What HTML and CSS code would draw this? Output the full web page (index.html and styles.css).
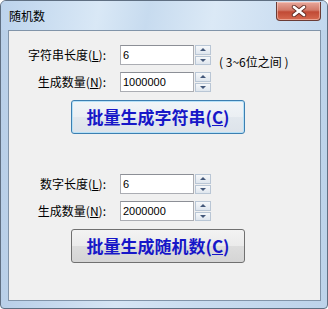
FILE: index.html
```html
<!DOCTYPE html>
<html lang="zh-CN">
<head>
  <meta charset="UTF-8">
  <title>随机数</title>
  <link rel="stylesheet" href="styles.css">
</head>
<body>
  <div class="window">
    <div class="titlebar">
      <span class="title">随机数</span>
      <div class="close">
        <svg width="16" height="12" viewBox="0 0 16 12">
          <path d="M3 2 L13 10 M13 2 L3 10" stroke="#5e2a22" stroke-width="4.4" stroke-linecap="round"/>
          <path d="M3 2 L13 10 M13 2 L3 10" stroke="#fff" stroke-width="2.8" stroke-linecap="round"/>
        </svg>
      </div>
    </div>

    <div class="client">
      <!-- string generator -->
      <div class="group">
        <div class="fields">
          <label class="lbl">字符串长度(<u>L</u>):</label>
          <input class="edit" type="text" value="6">
          <div class="spin"><span class="up"></span><span class="down"></span></div>
          <span class="hint">( 3~6位之间 )</span>

          <label class="lbl">生成数量(<u>N</u>):</label>
          <input class="edit" type="text" value="1000000">
          <div class="spin"><span class="up"></span><span class="down"></span></div>
        </div>
        <button class="big default">批量生成字符串(<u>C</u>)</button>
      </div>

      <!-- number generator -->
      <div class="group second">
        <div class="fields">
          <label class="lbl">数字长度(<u>L</u>):</label>
          <input class="edit" type="text" value="6">
          <div class="spin"><span class="up"></span><span class="down"></span></div>

          <label class="lbl">生成数量(<u>N</u>):</label>
          <input class="edit" type="text" value="2000000">
          <div class="spin"><span class="up"></span><span class="down"></span></div>
        </div>
        <button class="big">批量生成随机数(<u>C</u>)</button>
      </div>
    </div>
  </div>
</body>
</html>
```

FILE: styles.css
```css
body {
  margin: 0;
  font-family: "Noto Sans CJK SC", sans-serif;
  font-size: 12px;
  color: #000;
  background: #fff;
}
.window {
  width: 328px;
  height: 309px;
  box-sizing: border-box;
  border: 1px solid #5f6f82;
  border-radius: 6px 6px 4px 4px;
  background: linear-gradient(to right, #b8cfe8, #d6e5f4 35%, #c9dcef 60%, #bdd3ea);
  display: flex;
  flex-direction: column;
  overflow: hidden;
}
.titlebar {
  height: 29px;
  flex: none;
  display: flex;
  justify-content: space-between;
  align-items: flex-start;
  background: linear-gradient(100deg, #bcd3ec 0%, #d9e8f6 30%, #c7dbef 45%, #dbe9f6 65%, #c2d7ee 100%);
}
.title {
  margin: 7px 0 0 8px;
  line-height: 16px;
  font-size: 12px;
}
.close {
  width: 45px;
  height: 19px;
  margin: 1px 6px 0 0;
  box-sizing: border-box;
  border: 1px solid #6a3b35;
  border-top: none;
  border-radius: 0 0 4px 4px;
  background: linear-gradient(#e8a79b, #d27a69 45%, #c14a35 55%, #d66a50);
  box-shadow: inset 0 0 0 1px rgba(255, 220, 210, 0.5);
  display: flex;
  align-items: center;
  justify-content: center;
}
.close svg {
  display: block;
}
.client {
  flex: 1;
  margin: 0 6px 7px 7px;
  border: 1px solid #8194a9;
  background: #f0f0f0;
}
.group {
  padding-top: 14px;
}
.group.second {
  padding-top: 40px;
}
.fields {
  display: grid;
  grid-template-columns: 103px 74px 16px auto;
  grid-auto-rows: 20px;
  row-gap: 7px;
}
.lbl {
  grid-column: 1;
  text-align: right;
  line-height: 20px;
  padding-right: 6px;
}
.edit {
  grid-column: 2;
  width: 74px;
  height: 20px;
  margin: 0 -8px 0 8px;
  box-sizing: border-box;
  border: 1px solid #abadb3;
  border-top-color: #8c8f96;
  padding: 0 2px;
  font-family: "Liberation Sans", sans-serif;
  font-size: 11px;
  color: #000;
  background: #fff;
  outline: none;
}
.spin {
  grid-column: 3;
  width: 16px;
  margin: 0 -9px 0 9px;
  display: flex;
  flex-direction: column;
  gap: 1px;
}
.spin span {
  flex: 1;
  box-sizing: border-box;
  border: 1px solid #b9c6d5;
  background: linear-gradient(#f6f8fa, #dfe6ee);
  display: flex;
  align-items: center;
  justify-content: center;
}
.spin span::before {
  content: "";
  border-left: 3px solid transparent;
  border-right: 3px solid transparent;
}
.spin .up::before {
  border-bottom: 3px solid #44587a;
}
.spin .down::before {
  border-top: 3px solid #44587a;
}
.hint {
  grid-column: 4;
  padding-left: 17px;
  align-self: end;
  margin-bottom: -4px;
  line-height: 14px;
  font-size: 12px;
  white-space: pre;
}
.big {
  display: block;
  margin: 8px 0 0 62px;
  width: 174px;
  height: 34px;
  box-sizing: border-box;
  border: 1px solid #707070;
  border-radius: 3px;
  background: linear-gradient(#f3f3f3, #ebebeb 50%, #dddddd 51%, #d5d5d5);
  font-family: "Noto Sans CJK SC", sans-serif;
  font-size: 17px;
  font-weight: bold;
  color: #1717c8;
  padding: 0;
  line-height: 30px;
}
.big.default {
  border-color: #3c7fb1;
  box-shadow: inset 0 0 0 1px #b6e1f8;
  background: linear-gradient(#f1f5f8, #ebeff3 50%, #e2e8ee 51%, #dde3ea);
}
```
